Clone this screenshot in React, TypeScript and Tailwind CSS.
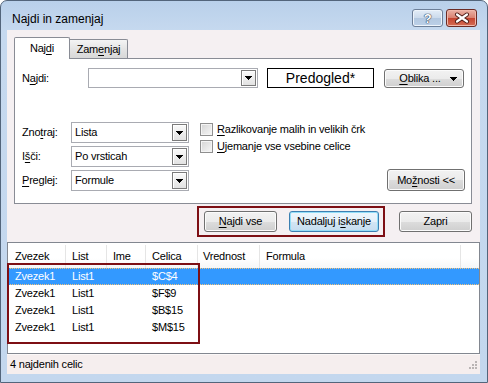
import React from "react"

function U({ children }: { children: React.ReactNode }) {
  return <span className="underline decoration-1 underline-offset-[2px]">{children}</span>
}

function Arrow() {
  return (
    <svg width="7" height="4" viewBox="0 0 7 4" shapeRendering="crispEdges">
      <path d="M0 0h7v1H0zM1 1h5v1H1zM2 2h3v1H2zM3 3h1v1H3z" fill="#000" />
    </svg>
  )
}

function Combo({ value, className }: { value?: string; className: string }) {
  return (
    <div className={`flex border border-[#a9abb2] bg-white ${className}`}>
      <div className="flex flex-1 items-center pl-[3px]">{value}</div>
      <div className="my-[1px] mr-[1px] flex w-[15px] items-center justify-center border border-[#7b7b7b] bg-[linear-gradient(#fafafa,#e2e2e2)] shadow-[inset_1px_1px_0_#ffffff]">
        <Arrow />
      </div>
    </div>
  )
}

function Btn({ className, focus, children }: { className: string; focus?: boolean; children: React.ReactNode }) {
  const look = focus
    ? "border-[#3c7fb1] bg-[linear-gradient(#eef6fc_0%,#e4f0f9_50%,#d3e6f4_50%,#c6ddf0_100%)] shadow-[inset_0_0_0_1px_#93def8]"
    : "border-[#707070] bg-[linear-gradient(#f2f2f2_0%,#ebebeb_50%,#dddddd_50%,#cfcfcf_100%)] shadow-[inset_0_0_0_1px_#fbfbfb]"
  return (
    <div className={`flex items-center justify-center rounded-[3px] border ${look} ${className}`}>{children}</div>
  )
}

function Check({ children }: { children: React.ReactNode }) {
  return (
    <div className="flex h-[13px] items-center gap-[4px]">
      <div className="h-[13px] w-[13px] border border-[#8f8f8f] bg-[linear-gradient(135deg,#d4d4d4,#f7f7f7)] shadow-[inset_0_0_0_1px_#f4f4f4]" />
      <span>{children}</span>
    </div>
  )
}

const rows = [
  ["Zvezek1", "List1", "", "$C$4"],
  ["Zvezek1", "List1", "", "$F$9"],
  ["Zvezek1", "List1", "", "$B$15"],
  ["Zvezek1", "List1", "", "$M$15"],
]

export default function App() {
  return (
    <div className="relative h-[383px] w-[488px] bg-white font-['Liberation_Sans',Arial,sans-serif] text-[11px] tracking-[-0.2px] text-black">
      {/* window frame */}
      <div className="flex h-full flex-col rounded-t-[7px] border border-[#53657b] bg-[linear-gradient(#b9d0ea,#c6d9ef_30px,#c3d7ee)]">
        {/* title bar */}
        <div className="flex h-[29px] items-start">
          <span className="ml-[11px] mt-[11px] text-[12px] leading-[15px] tracking-normal">Najdi in zamenjaj</span>
          <div className="ml-auto mr-[10px] mt-[8px] flex gap-[3px]">
            <div className="flex h-[18px] w-[31px] items-center justify-center rounded-[3px] border border-[#6d7f98] bg-[linear-gradient(#e4edf7_0%,#cbdaeb_50%,#b3c8e0_50%,#bcd0e8_100%)] shadow-[inset_0_0_0_1px_#eef4fb]">
              <span className="text-[13px] font-bold leading-none text-white [text-shadow:0_0_1px_#283b55,0_0_1px_#283b55,0_0_1px_#283b55]">?</span>
            </div>
            <div className="flex h-[18px] w-[31px] items-center justify-center rounded-[3px] border border-[#6b2b25] bg-[linear-gradient(#eab2a6_0%,#d9806f_50%,#c4432f_50%,#d56d55_100%)] shadow-[inset_0_0_0_1px_#f0b8ab]">
              <svg width="16" height="12" viewBox="0 0 16 12">
                <path d="M3 2.5L13 9.5M13 2.5L3 9.5" stroke="#4a1b16" strokeWidth="4" strokeLinecap="round" />
                <path d="M3 2.5L13 9.5M13 2.5L3 9.5" stroke="#ffffff" strokeWidth="2.2" strokeLinecap="round" />
              </svg>
            </div>
          </div>
        </div>

        {/* client area */}
        <div className="ml-[6px] mr-[7px] flex h-[344px] flex-col bg-[#f5f0f2]">
          {/* tabs */}
          <div className="ml-[7px] mt-[7px] flex h-[21px] items-end">
            <div className="relative z-10 -mb-px flex h-[22px] w-[56px] items-center justify-center rounded-t-[2px] border border-b-0 border-[#898c95] bg-white">
              Naj<U>d</U>i
            </div>
            <div className="flex h-[19px] w-[58px] items-center justify-center rounded-tr-[2px] border-r border-t border-[#898c95] bg-[linear-gradient(#f4f4f4,#e4e4e4_50%,#d8d8d8)] pt-[1px]">
              Zam<U>e</U>njaj
            </div>
          </div>

          {/* tab panel */}
          <div className="ml-[7px] flex h-[146px] w-[458px] flex-col border border-[#898c95] bg-white">
            <div className="mt-[9px] flex h-[20px] items-center pl-[7px]">
              <span className="w-[66px]">N<U>a</U>jdi:</span>
              <Combo className="h-[20px] w-[170px]" />
              <div className="ml-[9px] flex h-[20px] w-[107px] items-center justify-center border border-black text-[14px] tracking-normal">
                Predogled*
              </div>
              <Btn className="relative ml-[10px] h-[19px] w-[80px]">
                <span className="mr-[8px]"><U>O</U>blika ...</span>
                <span className="absolute right-[6px] top-[7px] flex"><Arrow /></span>
              </Btn>
            </div>

            <div className="mt-[34px] flex pl-[7px] pr-[6px]">
              <div className="flex flex-col gap-[3px]">
                <div className="flex h-[21px] items-center">
                  <span className="w-[49px]">Zno<U>t</U>raj:</span>
                  <Combo value="Lista" className="h-[21px] w-[118px]" />
                </div>
                <div className="flex h-[21px] items-center">
                  <span className="w-[49px]">I<U>š</U>či:</span>
                  <Combo value="Po vrsticah" className="h-[21px] w-[118px]" />
                </div>
                <div className="flex h-[21px] items-center">
                  <span className="w-[49px]"><U>P</U>reglej:</span>
                  <Combo value="Formule" className="h-[21px] w-[118px]" />
                </div>
              </div>
              <div className="ml-[11px] flex flex-col gap-[4px] pt-[1px]">
                <Check><U>R</U>azlikovanje malih in velikih črk</Check>
                <Check><U>U</U>jemanje vse vsebine celice</Check>
              </div>
              <Btn className="ml-auto h-[22px] w-[78px] self-end">
                Mo<U>ž</U>nosti &lt;&lt;
              </Btn>
            </div>
          </div>

          {/* action buttons */}
          <div className="mt-[7px] flex justify-end pr-[8px]">
            <Btn className="h-[21px] w-[73px]"><U>N</U>ajdi vse</Btn>
            <Btn focus className="ml-[12px] h-[21px] w-[90px]">Nadaljuj i<U>s</U>kanje</Btn>
            <Btn className="ml-[20px] h-[21px] w-[73px]">Zapri</Btn>
          </div>

          {/* results list */}
          <div className="mt-[10px] flex h-[112px] flex-col border border-[#828790] bg-white">
            <div className="flex h-[25px] bg-[linear-gradient(#ffffff_60%,#f5f6f7)] pt-[2px]">
              <div className="flex w-[58px] items-center border-r border-[#e5e5e5] pl-[7px]">Zvezek</div>
              <div className="flex w-[41px] items-center border-r border-[#e5e5e5] pl-[6px]">List</div>
              <div className="flex w-[39px] items-center border-r border-[#e5e5e5] pl-[6px]">Ime</div>
              <div className="flex w-[52px] items-center border-r border-[#e5e5e5] pl-[6px]">Celica</div>
              <div className="flex w-[62px] items-center border-r border-[#e5e5e5] pl-[5px]">Vrednost</div>
              <div className="flex w-[201px] items-center border-r border-[#e5e5e5] pl-[6px]">Formula</div>
            </div>
            {rows.map((r, i) => (
              <div
                key={i}
                className={`flex h-[17px] items-center ${i === 0 ? "border-y border-dotted border-[#f3c27a] bg-[#3399ff] text-white" : ""}`}
              >
                <span className="w-[58px] pl-[7px]">{r[0]}</span>
                <span className="w-[41px] pl-[6px]">{r[1]}</span>
                <span className="w-[39px] pl-[6px]">{r[2]}</span>
                <span className="w-[52px] pl-[6px]">{r[3]}</span>
              </div>
            ))}
          </div>

          {/* status bar */}
          <div className="relative flex h-[20px] items-center bg-[#f5eeee] pl-[3px] shadow-[inset_0_1px_0_#fbf8f8]">
            4 najdenih celic
            <svg className="absolute bottom-[2px] right-[2px]" width="11" height="11" viewBox="0 0 11 11" shapeRendering="crispEdges">
              <g fill="#b9b4b4">
                <rect x="8" y="0" width="2" height="2" />
                <rect x="5" y="3" width="2" height="2" />
                <rect x="8" y="3" width="2" height="2" />
                <rect x="2" y="6" width="2" height="2" />
                <rect x="5" y="6" width="2" height="2" />
                <rect x="8" y="6" width="2" height="2" />
              </g>
            </svg>
          </div>
        </div>
      </div>

      {/* red annotation rectangles */}
      <div className="pointer-events-none absolute left-[197px] top-[206px] h-[31px] w-[188px] border-2 border-[#7d0f14]" />
      <div className="pointer-events-none absolute left-[7px] top-[263px] h-[81px] w-[193px] border-2 border-[#7d0f14]" />
    </div>
  )
}
